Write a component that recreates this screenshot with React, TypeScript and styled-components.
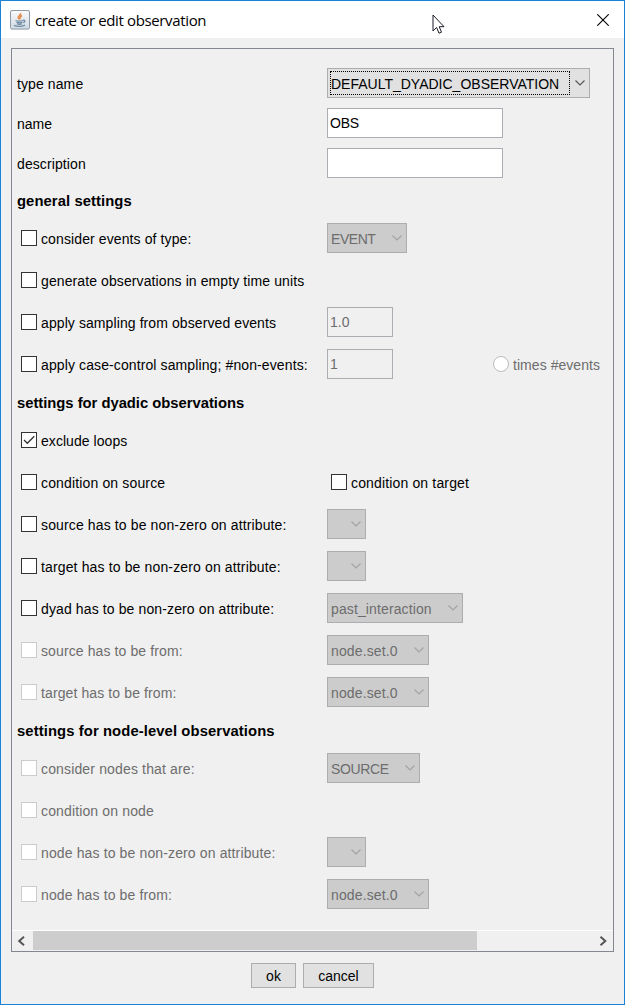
import React from "react";
import styled, { createGlobalStyle } from "styled-components";

const GlobalStyle = createGlobalStyle`
  * { box-sizing: border-box; }
  body { margin: 0; background: #f0f0f0; font: 14px/16px "Liberation Sans", Arial, sans-serif; color: #000; }
`;

const Window = styled.div`
  position: relative;
  display: flex;
  flex-direction: column;
  width: 625px;
  height: 1005px;
  border: 1px solid #1883d7;
  background: #f0f0f0;
`;

const TitleBar = styled.header`
  display: flex;
  align-items: center;
  height: 37px;
  padding: 0 15px 0 9px;
  background: #fff;
`;

const Title = styled.h1<{ $ls: number }>`
  flex: 1;
  margin: 0 0 0 5px;
  font: 400 15px/20px "Open Sans", sans-serif;
  letter-spacing: ${(p) => p.$ls}px;
`;

const Cursor = styled.svg`
  position: absolute;
  left: 431px;
  top: 13px;
`;

const Frame = styled.main`
  display: flex;
  flex-direction: column;
  width: 603px;
  height: 904px;
  margin: 10px 0 0 10px;
  border: 1px solid #828790;
`;

const Form = styled.div`
  flex: 1;
  padding: 14px 0 0 5px;
`;

const Row = styled.div<{ $h?: number }>`
  display: grid;
  grid-template-columns: 310px 162px 1fr;
  align-items: center;
  height: ${(p) => p.$h ?? 42}px;
`;

const Text = styled.span<{ $ls?: number; $off?: boolean }>`
  padding-top: 2px;
  white-space: nowrap;
  letter-spacing: ${(p) => p.$ls ?? 0}px;
  color: ${(p) => (p.$off ? "#6d6d6d" : "#000")};
`;

const Heading = styled.h2<{ $ls?: number }>`
  display: flex;
  align-items: center;
  height: 34px;
  margin: 0;
  padding-top: 2px;
  font-size: 14.8px;
  font-weight: 700;
  letter-spacing: ${(p) => p.$ls ?? 0}px;
`;

const Option = styled.label`
  display: flex;
  align-items: center;
  gap: 4px;
  padding-left: 4px;
`;

const Box = styled.span<{ $off?: boolean; $round?: boolean }>`
  display: flex;
  flex: none;
  width: 16px;
  height: 16px;
  border: 1px solid ${(p) => (p.$off ? (p.$round ? "#bcbcbc" : "#ccc") : "#333")};
  border-radius: ${(p) => (p.$round ? "50%" : "0")};
  background: #fff;
`;

const Field = styled.div<{ $w: number; $off?: boolean }>`
  display: flex;
  align-items: center;
  width: ${(p) => p.$w}px;
  height: 30px;
  padding-left: 2px;
  border: 1px solid #abadb3;
  background: ${(p) => (p.$off ? "#f0f0f0" : "#fff")};
  color: ${(p) => (p.$off ? "#6d6d6d" : "#000")};
  letter-spacing: ${(p) => (p.$off ? 0 : -0.2)}px;
`;

const Select = styled.div<{ $w: number; $off?: boolean }>`
  display: flex;
  align-items: center;
  justify-content: space-between;
  width: ${(p) => p.$w}px;
  height: 30px;
  padding: 0 4px 0 2px;
  border: 1px solid #adadb1;
  background: ${(p) => (p.$off ? "#ccc" : "#e1e1e1")};
`;

const SelectValue = styled.span<{ $focus?: boolean }>`
  display: flex;
  align-items: center;
  height: 24px;
  width: ${(p) => (p.$focus ? "240px" : "auto")};
  border: 1px ${(p) => (p.$focus ? "dotted #000" : "solid transparent")};
`;

const ScrollBar = styled.div`
  display: flex;
  align-items: center;
  height: 21px;
  border-top: 1px solid #fff;
`;

const ScrollButton = styled.span<{ $end?: boolean }>`
  display: flex;
  align-items: center;
  justify-content: ${(p) => (p.$end ? "flex-end" : "flex-start")};
  width: 21px;
  height: 20px;
  padding: 0 6px 0 5px;
`;

const Track = styled.div`
  flex: 1;
  height: 20px;
`;

const Thumb = styled.div`
  width: 444px;
  height: 19px;
  background: #cdcdcd;
`;

const Footer = styled.footer`
  display: flex;
  gap: 7px;
  padding: 11px 0 0 250px;
`;

const Button = styled.div<{ $w: number }>`
  display: flex;
  align-items: center;
  justify-content: center;
  width: ${(p) => p.$w}px;
  height: 25px;
  border: 1px solid #adadad;
  background: #e1e1e1;
`;

const JavaIcon = () => (
  <svg width="20" height="20" viewBox="0 0 20 20" fill="none">
    <defs>
      <linearGradient id="tile" x1="0" y1="0" x2="0" y2="1">
        <stop offset="0" stopColor="#fafbfc" />
        <stop offset="1" stopColor="#cfd8e2" />
      </linearGradient>
    </defs>
    <rect x=".5" y=".5" width="19" height="18.6" rx="1.5" fill="url(#tile)" stroke="#8d9aa8" />
    <path d="M10.500 3.200c1 1.800-3 2.800-2.300 4.600.4.900 1.300 1.200 1.500 1.800M12 5.500c-1.800 1-2.500 1.700-1.500 3.300" stroke="#e58a48" strokeWidth="1.600" />
    <path d="M5.500 10.500c2 .8 5 .8 7.500 0M6.500 12.300c2 .7 4 .7 5.800 0M13 10.300c2.400-.5 2.500 1.700.2 2.400M7 14c1.500.5 3.300.5 4.900 0" stroke="#6f8ba2" strokeWidth="1.300" />
    <path d="M4 15.300c3 1.200 8 1.100 11-.2" stroke="#6f8ba2" strokeWidth="1.300" />
  </svg>
);

const Chevron = ({ off }: { off?: boolean }) => (
  <svg width="10" height="6" viewBox="0 0 10 6" fill="none">
    <path d="M.5 .5L5 5L9.500 .5" stroke={off ? "#a3a3a3" : "#555"} strokeWidth="1.100" />
  </svg>
);

const ScrollArrow = ({ right }: { right?: boolean }) => (
  <svg width="8" height="10" viewBox="0 0 8 10" fill="none">
    <path d={right ? "M1.500 .8L6.300 5L1.500 9.200" : "M7 .8L2.200 5L7 9.200"} stroke="#555" strokeWidth="2" />
  </svg>
);

type CheckProps = { label: string; ls?: number; off?: boolean; checked?: boolean; round?: boolean };

const Check = ({ label, ls = 0.11, off, checked, round }: CheckProps) => (
  <Option>
    <Box $off={off} $round={round}>
      {checked && (
        <svg width="14" height="14" viewBox="0 0 14 14" fill="none">
          <path d="M2 7L5.300 10.300L12.300 3.300" stroke="#333" strokeWidth="1.300" />
        </svg>
      )}
    </Box>
    <Text $ls={ls} $off={off}>{label}</Text>
  </Option>
);

type ComboProps = { value?: string; w: number; ls?: number; active?: boolean };

const Combo = ({ value = "", w, ls, active }: ComboProps) => (
  <Select $w={w} $off={!active}>
    <SelectValue $focus={active}>
      <Text $ls={ls} $off={!active}>{value}</Text>
    </SelectValue>
    <Chevron off={!active} />
  </Select>
);

export default function App() {
  return (
    <Window>
      <GlobalStyle />
      <TitleBar>
        <JavaIcon />
        <Title $ls={-0.36}>create or edit observation</Title>
        <svg width="12" height="12" viewBox="0 0 12 12">
          <path d="M.3 .3L11.700 11.700M11.700 .3L.3 11.700" stroke="#000" strokeWidth="1.100" />
        </svg>
      </TitleBar>
      <Frame>
        <Form>
          <Row $h={40}>
            <Text $ls={0.1}>type name</Text>
            <Combo active value="DEFAULT_DYADIC_OBSERVATION" w={263} />
          </Row>
          <Row $h={40}>
            <Text>name</Text>
            <Field $w={176}>OBS</Field>
          </Row>
          <Row $h={40}>
            <Text $ls={0.1}>description</Text>
            <Field $w={176} />
          </Row>

          <Heading $ls={0.08}>general settings</Heading>
          <Row>
            <Check label="consider events of type:" />
            <Combo value="EVENT" w={80} ls={-0.45} />
          </Row>
          <Row>
            <Check label="generate observations in empty time units" ls={0.1} />
          </Row>
          <Row>
            <Check label="apply sampling from observed events" ls={0.09} />
            <Field $w={66} $off>1.0</Field>
          </Row>
          <Row>
            <Check label="apply case-control sampling; #non-events:" ls={0.11} />
            <Field $w={66} $off>1</Field>
            <Check label="times #events" off round ls={0.05} />
          </Row>

          <Heading $ls={-0.02}>settings for dyadic observations</Heading>
          <Row>
            <Check label="exclude loops" checked ls={0.05} />
          </Row>
          <Row>
            <Check label="condition on source" ls={0.15} />
            <Check label="condition on target" ls={0.15} />
          </Row>
          <Row>
            <Check label="source has to be non-zero on attribute:" ls={0.13} />
            <Combo w={39} />
          </Row>
          <Row>
            <Check label="target has to be non-zero on attribute:" ls={0.14} />
            <Combo w={39} />
          </Row>
          <Row>
            <Check label="dyad has to be non-zero on attribute:" ls={0.12} />
            <Combo value="past_interaction" w={136} ls={0.12} />
          </Row>
          <Row>
            <Check label="source has to be from:" off />
            <Combo value="node.set.0" w={102} ls={0.13} />
          </Row>
          <Row>
            <Check label="target has to be from:" off />
            <Combo value="node.set.0" w={102} ls={0.13} />
          </Row>

          <Heading $ls={0.1}>settings for node-level observations</Heading>
          <Row>
            <Check label="consider nodes that are:" off ls={0.15} />
            <Combo value="SOURCE" w={93} ls={-0.35} />
          </Row>
          <Row>
            <Check label="condition on node" off ls={0.14} />
          </Row>
          <Row>
            <Check label="node has to be non-zero on attribute:" off ls={0.13} />
            <Combo w={39} />
          </Row>
          <Row>
            <Check label="node has to be from:" off ls={0.13} />
            <Combo value="node.set.0" w={102} ls={0.13} />
          </Row>
        </Form>
        <ScrollBar>
          <ScrollButton><ScrollArrow /></ScrollButton>
          <Track><Thumb /></Track>
          <ScrollButton $end><ScrollArrow right /></ScrollButton>
        </ScrollBar>
      </Frame>
      <Footer>
        <Button $w={45}>ok</Button>
        <Button $w={71}>cancel</Button>
      </Footer>
      <Cursor width="13" height="21" viewBox="0 0 13 21">
        <path d="M1 1V17L4.600 13.500L7 19.200L9.500 18.200L7.200 12.700H12Z" fill="#fff" stroke="#1a1a2a" />
      </Cursor>
    </Window>
  );
}
